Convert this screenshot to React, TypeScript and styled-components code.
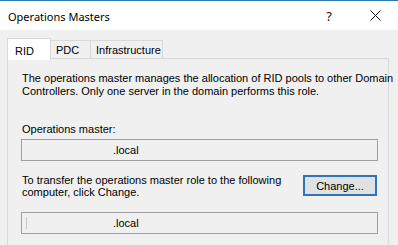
import * as React from "react"
import styled, {createGlobalStyle} from "styled-components";

const GlobalStyle = createGlobalStyle`
  html, body {
    margin: 0;
    padding: 0;
    background: #f0f0f0;
  }
  body {
    width: 398px;
    height: 245px;
    overflow: hidden;
    font-family: "Liberation Sans", Arial, sans-serif;
    font-size: 11px;
    color: #000;
  }
`

const tabs = [
  {name: 'RID', width: 44},
  {name: 'PDC', width: 41},
  {name: 'Infrastructure', width: 73},
]

const App = () => {
  return (
    <Window>
      <GlobalStyle/>
      <TitleBar>
        <Title>Operations Masters</Title>
        <TitleButtons>
          <TitleButton>?</TitleButton>
          <TitleButton>
            <svg width="11" height="11" viewBox="0 0 11 11">
              <path d="M0.5 0.5 L10.5 10.5 M10.5 0.5 L0.5 10.5" stroke="#111" strokeWidth="1"/>
            </svg>
          </TitleButton>
        </TitleButtons>
      </TitleBar>

      <Body>
        <TabRow>
          {tabs.map((t, i) => (
            <Tab key={t.name} active={i === 0} w={t.width}>{t.name}</Tab>
          ))}
        </TabRow>
        <Panel>
          <Text>
            The operations master manages the allocation of RID pools to other Domain<br/>
            Controllers. Only one server in the domain performs this role.
          </Text>
          <Label>Operations master:</Label>
          <ReadOnlyBox><BoxText>.local</BoxText></ReadOnlyBox>
          <TransferRow>
            <TransferText>
              To transfer the operations master role to the following<br/>
              computer, click Change.
            </TransferText>
            <Button>Change...</Button>
          </TransferRow>
          <ReadOnlyBox><Caret/><BoxText>.local</BoxText></ReadOnlyBox>
        </Panel>
      </Body>
    </Window>
  );
};

const Window = styled.div`
  width: 398px;
  height: 245px;
  display: flex;
  flex-direction: column;
  border-top: 1px solid #2b79b0;
  box-sizing: border-box;
`

const TitleBar = styled.div`
  height: 29px;
  background: #fff;
  display: flex;
  align-items: center;
  justify-content: space-between;
  padding-left: 8px;
`

const Title = styled.div`
  font-family: "Noto Sans", "Open Sans", sans-serif;
  font-size: 11px;
  color: #000;
  margin-top: 1px;
`

const TitleButtons = styled.div`
  display: flex;
  align-items: center;
`

const TitleButton = styled.div`
  width: 46px;
  height: 29px;
  display: flex;
  align-items: center;
  justify-content: center;
  font-family: "Noto Sans", sans-serif;
  font-size: 13px;
  color: #111;
  &:first-child {
    padding-left: 4px;
  }
`

const Body = styled.div`
  flex: 1;
  padding: 8px 9px 0 7px;
  display: flex;
  flex-direction: column;
`

const TabRow = styled.div`
  display: flex;
  align-items: flex-end;
  height: 21px;
  position: relative;
  z-index: 1;
  margin-bottom: -1px;
`

const Tab = styled.div<{active?: boolean; w: number}>`
  box-sizing: border-box;
  width: ${p => p.w}px;
  height: ${p => p.active ? '22px' : '19px'};
  margin-bottom: ${p => p.active ? '-1px' : '0'};
  padding: ${p => p.active ? '2px 0 0 7px' : '1px 0 0 5px'};
  background: ${p => p.active ? '#fff' : '#f0f0f0'};
  border: 1px solid #d9d9d9;
  border-bottom: ${p => p.active ? 'none' : '1px solid #d9d9d9'};
  margin-left: ${p => p.active ? '0' : '-1px'};
  display: flex;
  align-items: center;
  font-size: 11px;
`

const Panel = styled.div`
  flex: 1;
  border: 1px solid #d9d9d9;
  border-bottom: none;
  background: #f0f0f0;
  padding: 13px 10px 0 13px;
  display: flex;
  flex-direction: column;
`

const Text = styled.div`
  line-height: 13px;
  padding-left: 1px;
  white-space: nowrap;
`

const Label = styled.div`
  line-height: 13px;
  margin-top: 25px;
  padding-left: 1px;
`

const ReadOnlyBox = styled.div`
  box-sizing: border-box;
  height: 22px;
  margin-top: 3px;
  border: 1px solid #a0a0a0;
  background: #f0f0f0;
  display: flex;
  align-items: center;
  padding-left: 91px;
  position: relative;
`

const Caret = styled.span`
  position: absolute;
  left: 4px;
  top: 4px;
  width: 1px;
  height: 12px;
  background: #c8c8c8;
`

const BoxText = styled.span`
  line-height: 13px;
`

const TransferRow = styled.div`
  display: flex;
  justify-content: space-between;
  align-items: flex-start;
  margin-top: 14px;
  margin-bottom: 11px;
`

const TransferText = styled.div`
  line-height: 12px;
  padding-left: 1px;
  margin-top: -1px;
  white-space: nowrap;
`

const Button = styled.div`
  box-sizing: border-box;
  width: 74px;
  height: 21px;
  margin-right: 1px;
  border: 2px solid #2e75b5;
  background: #e1e1e1;
  display: flex;
  align-items: center;
  justify-content: center;
  box-shadow: inset 0 0 0 1px #d4e3f1;
`

export default App;
